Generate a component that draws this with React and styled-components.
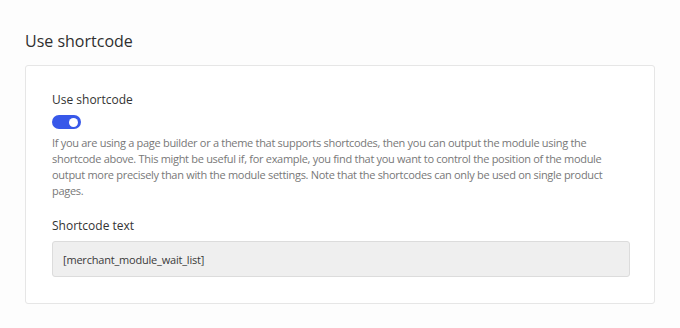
import React from 'react'
import styled, { createGlobalStyle } from 'styled-components'

const GlobalStyle = createGlobalStyle`
  body {
    margin: 0;
    background: #fdfdfd;
    font-family: "Open Sans", "Noto Sans", sans-serif;
  }
`;

const Page = styled.div`
  padding: 30px 25px 25px;
  width: 630px;
`;

const Heading = styled.h2`
  margin: 0 0 13px;
  font-size: 16px;
  font-weight: 400;
  color: #2f2f2f;
  line-height: 22px;
`;

const Card = styled.div`
  background: #fff;
  border: 1px solid #e6e6e6;
  border-radius: 3px;
  padding: 26px 24px 26px 26px;
`;

const Field = styled.div`
  display: flex;
  flex-direction: column;
  margin-bottom: ${({ $gap }) => $gap || 0}px;
`;

const Label = styled.span`
  font-size: 12px;
  color: #333;
  line-height: 16px;
  margin-bottom: ${({ $gap }) => $gap || 6}px;
`;

const Toggle = styled.span`
  display: inline-flex;
  align-items: center;
  justify-content: ${({ $on }) => ($on ? 'flex-end' : 'flex-start')};
  width: 29px;
  height: 14px;
  padding: 0 3px;
  box-sizing: border-box;
  border-radius: 7px;
  background: ${({ $on }) => ($on ? '#3858e9' : '#ccc')};
  margin: 1px 0 6px;

  &::after {
    content: '';
    width: 9px;
    height: 9px;
    border-radius: 50%;
    background: #fff;
  }
`;

const Help = styled.p`
  margin: 0;
  font-size: 11px;
  line-height: 16px;
  letter-spacing: -0.3px;
  color: #787878;
`;

const CodeBox = styled.div`
  height: 36px;
  box-sizing: border-box;
  display: flex;
  align-items: center;
  padding: 0 10px;
  background: #efefef;
  border: 1px solid #dcdcdc;
  border-radius: 3px;
  font-size: 11px;
  letter-spacing: -0.2px;
  color: #3a3a3a;
`;

const App = () => {
  return (
    <Page>
      <GlobalStyle />
      <Heading>Use shortcode</Heading>
      <Card>
        <Field $gap={19}>
          <Label>Use shortcode</Label>
          <Toggle $on />
          <Help>
            If you are using a page builder or a theme that supports shortcodes, then you can output the module using the
            shortcode above. This might be useful if, for example, you find that you want to control the position of the module
            output more precisely than with the module settings. Note that the shortcodes can only be used on single product
            pages.
          </Help>
        </Field>
        <Field>
          <Label $gap={7}>Shortcode text</Label>
          <CodeBox>[merchant_module_wait_list]</CodeBox>
        </Field>
      </Card>
    </Page>
  )
}

export default App
